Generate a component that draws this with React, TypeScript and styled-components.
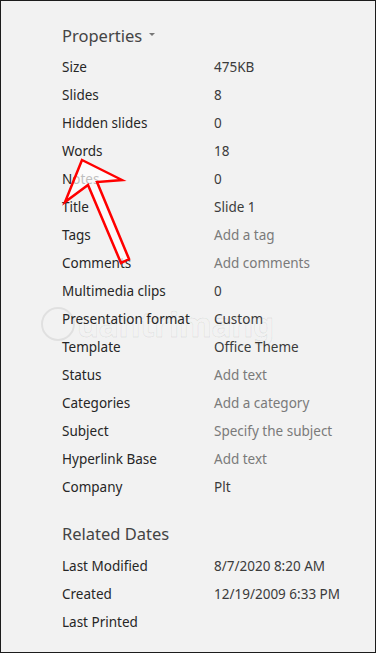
import styled, { createGlobalStyle } from "styled-components";

const GlobalStyle = createGlobalStyle`
  html, body {
    margin: 0;
    padding: 0;
    background: #f2f2f2;
  }
  * {
    box-sizing: border-box;
  }
`;

type Prop = {
  label: string;
  value: string;
  placeholder?: boolean;
};

const properties: Prop[] = [
  { label: "Size", value: "475KB" },
  { label: "Slides", value: "8" },
  { label: "Hidden slides", value: "0" },
  { label: "Words", value: "18" },
  { label: "Notes", value: "0" },
  { label: "Title", value: "Slide 1" },
  { label: "Tags", value: "Add a tag", placeholder: true },
  { label: "Comments", value: "Add comments", placeholder: true },
  { label: "Multimedia clips", value: "0" },
  { label: "Presentation format", value: "Custom" },
  { label: "Template", value: "Office Theme" },
  { label: "Status", value: "Add text", placeholder: true },
  { label: "Categories", value: "Add a category", placeholder: true },
  { label: "Subject", value: "Specify the subject", placeholder: true },
  { label: "Hyperlink Base", value: "Add text", placeholder: true },
  { label: "Company", value: "Plt" },
];

const dates: Prop[] = [
  { label: "Last Modified", value: "8/7/2020 8:20 AM" },
  { label: "Created", value: "12/19/2009 6:33 PM" },
  { label: "Last Printed", value: "" },
];

const App = () => {
  return (
    <>
      <GlobalStyle />
      <Panel>
        <Section>
          <Heading>
            Properties
            <Caret />
          </Heading>
          <List>
            {properties.map((p) => (
              <Row key={p.label}>
                <Label>{p.label}</Label>
                <Value $placeholder={p.placeholder}>{p.value}</Value>
              </Row>
            ))}
          </List>
        </Section>
        <Section $spaced>
          <Heading>Related Dates</Heading>
          <List>
            {dates.map((p) => (
              <Row key={p.label}>
                <Label>{p.label}</Label>
                <Value>{p.value}</Value>
              </Row>
            ))}
          </List>
        </Section>

        {/* faint site watermark */}
        <Watermark aria-hidden>
          <WatermarkBadge />
          uantrimang
        </Watermark>

        <Arrow width="376" height="653" viewBox="0 0 376 653">
          <polygon
            points="82,160 122,180 97,182 129,259 121,263 88,185 65,202"
            fill="#ffffff"
            fillOpacity="0.7"
            stroke="#ff0000"
            strokeWidth="2.5"
            strokeLinejoin="miter"
          />
        </Arrow>
      </Panel>
    </>
  );
};

const Panel = styled.div`
  position: relative;
  width: 376px;
  height: 653px;
  border: 1px solid #1c1c1c;
  background: #f2f2f2;
  padding: 22px 0 0 61px;
  font-family: "Noto Sans", "Open Sans", sans-serif;
  overflow: hidden;
`;

const Section = styled.section<{ $spaced?: boolean }>`
  display: flex;
  flex-direction: column;
  gap: ${(p) => (p.$spaced ? "7px" : "6px")};
  margin-top: ${(p) => (p.$spaced ? "20px" : "0")};
`;

const Heading = styled.h2`
  display: flex;
  align-items: center;
  gap: 7px;
  margin: 0;
  height: 24px;
  font-size: 16.5px;
  font-weight: 400;
  color: #444444;
`;

const Caret = styled.span`
  width: 0;
  height: 0;
  margin-top: -1px;
  border-left: 3px solid transparent;
  border-right: 3px solid transparent;
  border-top: 3px solid #777777;
`;

const List = styled.div`
  display: flex;
  flex-direction: column;
`;

const Row = styled.div`
  display: grid;
  grid-template-columns: 152px 1fr;
  align-items: center;
  height: 28px;
  font-size: 13.5px;
  white-space: nowrap;
`;

const Label = styled.span`
  color: #262626;
`;

const Value = styled.span<{ $placeholder?: boolean }>`
  color: ${(p) => (p.$placeholder ? "#7a7a7a" : "#3b3b3b")};
`;

const Watermark = styled.div`
  position: absolute;
  left: 40px;
  top: 300px;
  display: flex;
  align-items: center;
  gap: 2px;
  font-family: "Noto Sans", sans-serif;
  font-size: 34px;
  font-weight: 700;
  letter-spacing: -0.5px;
  color: transparent;
  -webkit-text-stroke: 1px rgba(0, 0, 0, 0.07);
  pointer-events: none;
`;

const WatermarkBadge = styled.span`
  width: 34px;
  height: 34px;
  border-radius: 50%;
  border: 2px solid rgba(0, 0, 0, 0.07);
`;

const Arrow = styled.svg`
  position: absolute;
  left: -1px;
  top: -1px;
  pointer-events: none;
`;

export default App;
